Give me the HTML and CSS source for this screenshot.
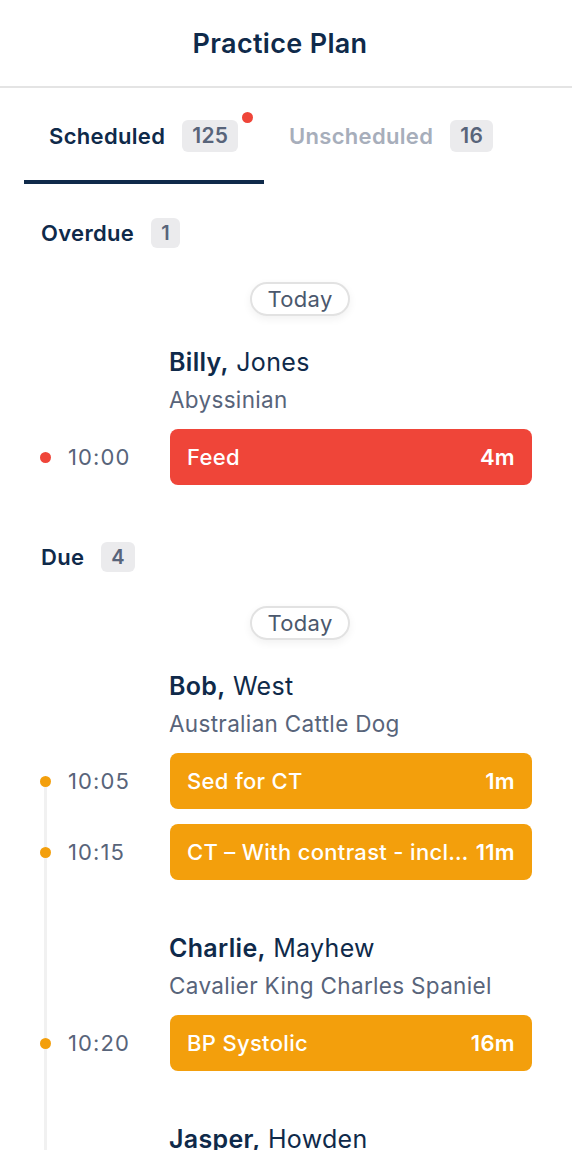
FILE: index.html
```html
<!DOCTYPE html>
<html lang="en">

<head>
    <meta charset="UTF-8">
    <meta name="viewport" content="width=device-width, initial-scale=1.0">
    <title>Practice Plan</title>

    <link rel="stylesheet" href="styles.css">
</head>

<body>
    <div class="header">Practice Plan</div>

    <div class="tabs">
        <div class="tab active">
            <span>Scheduled</span>
            <span class="badge">125<i class="notify"></i></span>
        </div>
        <div class="tab">
            <span>Unscheduled</span>
            <span class="badge">16</span>
        </div>
    </div>

    <!-- overdue -->
    <div class="section">
        <div class="sectionTitle">Overdue <span class="badge">1</span></div>
        <div class="day"><span class="pill">Today</span></div>

        <div class="group">
            <div class="patient">
                <div class="name"><b>Billy,</b> Jones</div>
                <div class="breed">Abyssinian</div>
            </div>
            <div class="task red">
                <div class="time"><i class="dot"></i>10:00</div>
                <div class="bar"><span>Feed</span><b>4m</b></div>
            </div>
        </div>
    </div>

    <!-- due -->
    <div class="section due">
        <div class="sectionTitle">Due <span class="badge">4</span></div>
        <div class="day"><span class="pill">Today</span></div>

        <div class="group timeline">
            <div class="patient">
                <div class="name"><b>Bob,</b> West</div>
                <div class="breed">Australian Cattle Dog</div>
            </div>
            <div class="task">
                <div class="time"><i class="dot"></i>10:05</div>
                <div class="bar"><span>Sed for CT</span><b>1m</b></div>
            </div>
            <div class="task">
                <div class="time"><i class="dot"></i>10:15</div>
                <div class="bar"><span>CT – With contrast - including sedation</span><b>11m</b></div>
            </div>

            <div class="patient next">
                <div class="name"><b>Charlie,</b> Mayhew</div>
                <div class="breed">Cavalier King Charles Spaniel</div>
            </div>
            <div class="task">
                <div class="time"><i class="dot"></i>10:20</div>
                <div class="bar"><span>BP Systolic</span><b>16m</b></div>
            </div>

            <div class="patient next">
                <div class="name"><b>Jasper,</b> Howden</div>
            </div>
        </div>
    </div>
</body>

</html>
```

FILE: styles.css
```css
* {
    box-sizing: border-box;
}

body {
    margin: 0;
    height: 1150px;
    font-family: Inter, "Noto Sans", sans-serif;
    letter-spacing: 0.02em;
    color: #0f2a4a;
    background-color: #fff;
    overflow: hidden;
}

.header {
    height: 88px;
    line-height: 88px;
    padding-right: 12px;
    text-align: center;
    font-size: 27px;
    font-weight: 600;
    border-bottom: 2px solid #e4e4e4;
}

.tabs {
    display: flex;
    padding-left: 24px;
}

.tab {
    width: 240px;
    display: flex;
    align-items: center;
    gap: 17px;
    padding: 32px 0 28px 25px;
    font-size: 22px;
    font-weight: 600;
    color: #a7aebb;
    border-bottom: 4px solid transparent;
}

.tab.active {
    color: #0f2a4a;
    border-bottom-color: #0f2a4a;
}

.badge {
    position: relative;
    display: inline-block;
    height: 32px;
    line-height: 32px;
    padding: 0 10px;
    border-radius: 6px;
    background-color: #ebebed;
    color: #58647a;
    font-size: 21px;
    font-weight: 600;
}

.notify {
    position: absolute;
    top: -8px;
    right: -15px;
    width: 11px;
    height: 11px;
    border-radius: 50%;
    background-color: #ef4539;
}

.section {
    padding-top: 34px;
}

.section.due {
    padding-top: 57px;
}

.sectionTitle {
    display: flex;
    align-items: center;
    gap: 17px;
    padding-left: 41px;
    font-size: 22px;
    font-weight: 600;
}

.sectionTitle .badge {
    height: 30px;
    line-height: 30px;
    padding: 0 10px;
    font-size: 20px;
}

.day {
    text-align: center;
    margin-top: 34px;
    margin-left: 28px;
}

.pill {
    display: inline-block;
    height: 34px;
    line-height: 30px;
    padding: 0 15px;
    border: 2px solid #e2e2e2;
    border-radius: 17px;
    font-size: 22px;
    color: #4b586d;
    box-shadow: 0 3px 8px rgba(0, 0, 0, 0.06);
}

.group {
    position: relative;
    padding-top: 31px;
}

/* grey rail running down from the first dot */
.timeline::before {
    content: "";
    position: absolute;
    left: 44px;
    top: 140px;
    bottom: -200px;
    width: 3px;
    background-color: #f1f1f1;
}

.patient {
    padding-left: 169px;
}

.patient.next {
    padding-top: 53px;
}

.name {
    font-size: 25px;
    line-height: 30px;
}

.name b {
    font-weight: 600;
}

.breed {
    margin-top: 9px;
    font-size: 22.5px;
    line-height: 28px;
    color: #58647a;
}

.task {
    position: relative;
    display: flex;
    align-items: center;
    margin-top: 15px;
    padding-right: 40px;
}

.time {
    width: 170px;
    display: flex;
    align-items: center;
    gap: 17px;
    padding-left: 40px;
    font-size: 22px;
    letter-spacing: 0.05em;
    color: #58647a;
}

.dot {
    flex: none;
    width: 11px;
    height: 11px;
    border-radius: 50%;
    background-color: #f39f0c;
}

.bar {
    flex: 1;
    min-width: 0;
    height: 56px;
    display: flex;
    align-items: center;
    gap: 6px;
    padding: 0 17px;
    border-radius: 8px;
    background-color: #f39f0c;
    color: #fff;
    font-size: 22px;
}

.bar span {
    flex: 1;
    min-width: 0;
    white-space: nowrap;
    overflow: hidden;
    text-overflow: ellipsis;
    font-weight: 500;
}

.bar b {
    font-weight: 600;
}

.task.red .dot,
.task.red .bar {
    background-color: #ef4539;
}
```
